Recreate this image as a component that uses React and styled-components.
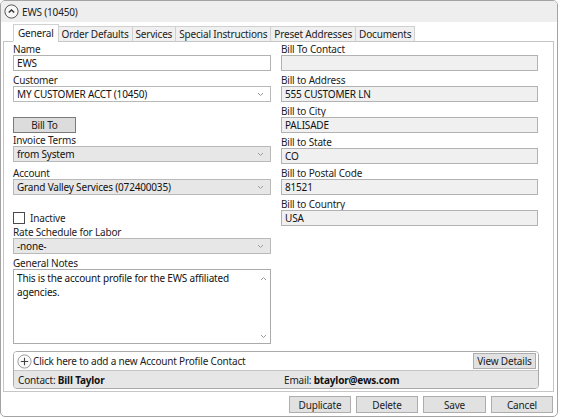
import React from "react";
import styled, { createGlobalStyle } from "styled-components";

const FONT = `"Noto Sans", "Open Sans", sans-serif`;

const GlobalStyle = createGlobalStyle`
  html, body { margin: 0; padding: 0; background: #ffffff; }
  body { font-family: ${FONT}; font-size: 10px; color: #1a1a1a; letter-spacing: -0.18px; }
  * { box-sizing: border-box; }
`;

const Frame = styled.div`
  width: 558px;
  height: 417px;
  border: 1px solid #a3a3a3;
  border-radius: 5px;
  overflow: hidden;
  display: flex;
  flex-direction: column;
  background: #ffffff;
`;

const Header = styled.div`
  height: 21px;
  flex: 0 0 21px;
  background: #eeeeee;
  display: flex;
  align-items: center;
  gap: 3px;
  padding-left: 3px;
  font-size: 10px;
  color: #222;
`;

const Content = styled.div`
  display: flex;
  flex-direction: column;
  padding: 2px 3px 0 2px;
`;

const TabStrip = styled.div`
  display: flex;
  align-items: flex-end;
  height: 18px;
  padding-left: 10px;
  margin-bottom: -1px;
  position: relative;
  z-index: 1;
`;

const Tab = styled.div`
  height: ${(p) => (p.$active ? 18 : 16)}px;
  padding: 0 3px;
  margin-left: -1px;
  display: flex;
  align-items: center;
  white-space: nowrap;
  font-size: 10px;
  color: #222;
  background: ${(p) => (p.$active ? "#ffffff" : "#f0f0f0")};
  border: 1px solid #d0d0d0;
  border-bottom: 1px solid ${(p) => (p.$active ? "#ffffff" : "#c6c6c6")};
  &:first-child { margin-left: 0; padding: 0 4px; }
`;

const Panel = styled.div`
  height: 351px;
  border: 1px solid #c6c6c6;
  padding: 1px 14px 2px 9px;
  display: flex;
  flex-direction: column;
  background: #ffffff;
`;

const Columns = styled.div`
  display: grid;
  grid-template-columns: 258px 257px;
  column-gap: 10px;
`;

const Column = styled.div`
  display: flex;
  flex-direction: column;
`;

const Label = styled.div`
  height: 12px;
  line-height: 12px;
  font-size: 10px;
  color: #222;
  margin-top: ${(p) => p.$mt ?? 0}px;
  white-space: nowrap;
`;

const TextBox = styled.div`
  height: 16px;
  border: 1px solid #b2b2b2;
  background: ${(p) => (p.$readOnly ? "#f0f0f0" : "#ffffff")};
  padding: 0 3px;
  display: flex;
  align-items: center;
  font-size: 10px;
  color: #111;
  white-space: nowrap;
`;

const Combo = styled.div`
  height: 16px;
  border: 1px solid #b9b9b9;
  background: ${(p) => (p.$gray ? "#e7e7e7" : "#ffffff")};
  padding: 0 6px 0 3px;
  display: flex;
  align-items: center;
  justify-content: space-between;
  font-size: 10px;
  color: #111;
  white-space: nowrap;
`;

const Button = styled.div`
  width: ${(p) => p.$w}px;
  height: ${(p) => p.$h ?? 17}px;
  background: ${(p) => p.$bg ?? "#e1e1e1"};
  border: 1px solid ${(p) => p.$border ?? "#adadad"};
  display: flex;
  align-items: center;
  justify-content: center;
  font-size: 10px;
  color: #222;
  white-space: nowrap;
  margin-top: ${(p) => p.$mt ?? 0}px;
  flex: 0 0 auto;
`;

const CheckRow = styled.div`
  display: flex;
  align-items: center;
  gap: 5px;
  height: 12px;
  margin-top: ${(p) => p.$mt ?? 0}px;
  font-size: 10px;
  color: #222;
`;

const CheckBox = styled.div`
  width: 12px;
  height: 12px;
  border: 1px solid #4a4a4a;
  background: #ffffff;
`;

const NotesBox = styled.div`
  height: 75px;
  border: 1px solid #ababab;
  display: flex;
  background: #ffffff;
`;

const NotesText = styled.div`
  flex: 1;
  padding: 1px 3px;
  font-size: 10px;
  line-height: 14px;
  color: #111;
`;

const ScrollBar = styled.div`
  width: 14px;
  display: flex;
  flex-direction: column;
  justify-content: space-between;
  align-items: center;
  padding: 6px 0 4px;
`;

const ContactStrip = styled.div`
  margin-top: auto;
  height: 38px;
  border: 1px solid #a9a9a9;
  border-radius: 4px;
  overflow: hidden;
  display: flex;
  flex-direction: column;
`;

const StripTop = styled.div`
  height: 18px;
  display: flex;
  align-items: center;
  padding-left: 3px;
  background: #ffffff;
  font-size: 10px;
  color: #222;
  gap: 1px;
`;

const ViewDetails = styled(Button)`
  margin-left: auto;
  margin-right: 2px;
`;

const StripBottom = styled.div`
  flex: 1;
  display: grid;
  grid-template-columns: 266px 1fr;
  align-items: center;
  padding: 0 4px;
  background: #e6e6e6;
  border-top: 1px solid #c4c4c4;
  font-size: 10px;
  color: #222;
  white-space: nowrap;
  b { font-weight: 700; color: #111; }
`;

const Footer = styled.div`
  display: flex;
  justify-content: flex-end;
  gap: 5px;
  padding: 4px 1px 0 0;
`;

const Chevron = ({ up }) => (
  <svg width="7" height="5" viewBox="0 0 7 5">
    <polyline
      points={up ? "1,4 3.5,1.5 6,4" : "1,1 3.5,3.5 6,1"}
      fill="none"
      stroke="#9a9a9a"
      strokeWidth="1"
    />
  </svg>
);

const CollapseIcon = () => (
  <svg width="15" height="15" viewBox="0 0 15 15">
    <circle cx="7.5" cy="7.5" r="6.6" fill="#f7f7f7" stroke="#555" strokeWidth="1" />
    <polyline points="4.8,8.6 7.5,5.9 10.2,8.6" fill="none" stroke="#333" strokeWidth="1.4" />
  </svg>
);

const PlusIcon = () => (
  <svg width="15" height="15" viewBox="0 0 15 15">
    <circle cx="7.5" cy="7.5" r="6.6" fill="#fafafa" stroke="#9a9a9a" strokeWidth="1" />
    <line x1="7.5" y1="3.8" x2="7.5" y2="11.2" stroke="#444" strokeWidth="1.1" />
    <line x1="3.8" y1="7.5" x2="11.2" y2="7.5" stroke="#444" strokeWidth="1.1" />
  </svg>
);

const tabs = [
  "General",
  "Order Defaults",
  "Services",
  "Special Instructions",
  "Preset Addresses",
  "Documents",
];

const billFields = [
  ["Bill To Contact", ""],
  ["Bill to Address", "555 CUSTOMER LN"],
  ["Bill to City", "PALISADE"],
  ["Bill to State", "CO"],
  ["Bill to Postal Code", "81521"],
  ["Bill to Country", "USA"],
];

export default function App() {
  return (
    <>
      <GlobalStyle />
      <Frame>
        <Header>
          <CollapseIcon />
          <span>EWS (10450)</span>
        </Header>
        <Content>
          <TabStrip>
            {tabs.map((t, i) => (
              <Tab key={t} $active={i === 0}>
                {t}
              </Tab>
            ))}
          </TabStrip>
          <Panel>
            <Columns>
              <Column>
                <Label>Name</Label>
                <TextBox>EWS</TextBox>
                <Label $mt={3}>Customer</Label>
                <Combo>
                  <span>MY CUSTOMER ACCT (10450)</span>
                  <Chevron />
                </Combo>
                <Button $w={63} $h={16} $mt={15} $bg="#dcdcdc" $border="#7a7a7a">
                  Bill To
                </Button>
                <Label $mt={1}>Invoice Terms</Label>
                <Combo $gray>
                  <span>from System</span>
                  <Chevron />
                </Combo>
                <Label $mt={5}>Account</Label>
                <Combo $gray>
                  <span>Grand Valley Services (072400035)</span>
                  <Chevron />
                </Combo>
                <CheckRow $mt={17}>
                  <CheckBox />
                  <span>Inactive</span>
                </CheckRow>
                <Label $mt={2}>Rate Schedule for Labor</Label>
                <Combo $gray>
                  <span>-none-</span>
                  <Chevron />
                </Combo>
                <Label $mt={3}>General Notes</Label>
                <NotesBox>
                  <NotesText>
                    This is the account profile for the EWS affiliated agencies.
                  </NotesText>
                  <ScrollBar>
                    <Chevron up />
                    <Chevron />
                  </ScrollBar>
                </NotesBox>
              </Column>
              <Column>
                {billFields.map(([label, value], i) => (
                  <React.Fragment key={label}>
                    <Label $mt={i === 0 ? 0 : 3}>{label}</Label>
                    <TextBox $readOnly>{value}</TextBox>
                  </React.Fragment>
                ))}
              </Column>
            </Columns>
            <ContactStrip>
              <StripTop>
                <PlusIcon />
                <span>Click here to add a new Account Profile Contact</span>
                <ViewDetails $w={63} $h={16}>
                  View Details
                </ViewDetails>
              </StripTop>
              <StripBottom>
                <span>
                  Contact: <b>Bill Taylor</b>
                </span>
                <span>
                  Email: <b>btaylor@ews.com</b>
                </span>
              </StripBottom>
            </ContactStrip>
          </Panel>
          <Footer>
            <Button $w={62}>Duplicate</Button>
            <Button $w={62}>Delete</Button>
            <Button $w={63}>Save</Button>
            <Button $w={62}>Cancel</Button>
          </Footer>
        </Content>
      </Frame>
    </>
  );
}
